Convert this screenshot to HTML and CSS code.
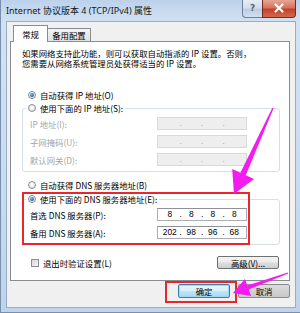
FILE: index.html
```html
<!DOCTYPE html>
<html lang="zh-CN">
<head>
<meta charset="utf-8">
<title>Internet 协议版本 4 (TCP/IPv4) 属性</title>
<link rel="stylesheet" href="styles.css">
</head>
<body>
<div class="window">
  <div class="titlebar">
    <span class="title">Internet 协议版本 4 (TCP/IPv4) 属性</span>
    <div class="caption-btns">
      <div class="cap help">?</div>
      <div class="cap close">
        <svg width="34" height="18" viewBox="0 0 34 18"><path d="M13.5 5.5 L20.5 12.5 M20.5 5.5 L13.5 12.5" stroke="#fff" stroke-width="2.2" stroke-linecap="round"/></svg>
      </div>
    </div>
  </div>
  <div class="client">
    <div class="tabs">
      <div class="tab active">常规</div>
      <div class="tab">备用配置</div>
    </div>
    <div class="panel">
      <p class="desc">如果网络支持此功能，则可以获取自动指派的 IP 设置。否则，</p>
      <p class="desc">您需要从网络系统管理员处获得适当的 IP 设置。</p>
      <div class="option first gap-a"><span class="radio on"></span>自动获得 IP 地址(O)</div>
      <fieldset class="group g1">
        <legend><span class="option"><span class="radio"></span>使用下面的 IP 地址(S):</span></legend>
        <div class="row dis"><span class="lbl">IP 地址(I):</span><span class="ip off"><i></i><b>.</b><i></i><b>.</b><i></i><b>.</b><i></i></span></div>
        <div class="row dis"><span class="lbl">子网掩码(U):</span><span class="ip off"><i></i><b>.</b><i></i><b>.</b><i></i><b>.</b><i></i></span></div>
        <div class="row dis"><span class="lbl">默认网关(D):</span><span class="ip off"><i></i><b>.</b><i></i><b>.</b><i></i><b>.</b><i></i></span></div>
      </fieldset>
      <div class="option first gap-b"><span class="radio"></span>自动获得 DNS 服务器地址(B)</div>
      <fieldset class="group g2">
        <legend><span class="option"><span class="radio on"></span>使用下面的 DNS 服务器地址(E):</span></legend>
        <div class="row"><span class="lbl">首选 DNS 服务器(P):</span><span class="ip"><i>8</i><b>.</b><i>8</i><b>.</b><i>8</i><b>.</b><i>8</i></span></div>
        <div class="row"><span class="lbl">备用 DNS 服务器(A):</span><span class="ip"><i>202</i><b>.</b><i>98</i><b>.</b><i>96</i><b>.</b><i>68</i></span></div>
      </fieldset>
      <div class="checkrow">
        <span class="check"></span><span class="checklbl">退出时验证设置(L)</span>
        <span class="btn adv">高级(V)...</span>
      </div>
    </div>
    <div class="actions">
      <span class="btn ok">确定</span>
      <span class="btn cancel">取消</span>
    </div>
  </div>
  <svg class="annot" width="300" height="313" viewBox="0 0 300 313">
    <rect x="23" y="193" width="226" height="51" fill="none" stroke="#e8272c" stroke-width="2"/>
    <rect x="166" y="282" width="70" height="20" fill="none" stroke="#e8272c" stroke-width="2"/>
    <polygon points="272.4,107.7 273.6,108.3 245.8,175.2 254,179 234,194 232.2,169 240.4,172.8" fill="#f21cf0"/>
    <polygon points="287.8,272.4 288.2,273.6 248.7,289.4 251.1,296 233,293 244.9,279 247.3,285.6" fill="#f21cf0"/>
  </svg>
</div>
</body>
</html>
```
FILE: styles.css
```css
* { box-sizing: border-box; }
html, body { margin: 0; padding: 0; }
body {
  width: 300px;
  height: 313px;
  overflow: hidden;
  font-family: "Noto Sans CJK SC", "Noto Sans", sans-serif;
  font-size: 8.4px;
  color: #000;
  background: #fff;
}
.window {
  position: relative;
  width: 300px;
  height: 313px;
  display: flex;
  flex-direction: column;
  background: linear-gradient(to bottom, #bcd2eb 0, #d3e2f2 22px, #c8dbef 60%, #bfd3ea 100%);
  box-shadow: inset 1px 0 0 #7890ad, inset 0 -1px 0 #7890ad;
}
.titlebar {
  height: 22px;
  flex: none;
  display: flex;
  align-items: flex-start;
}
.title {
  padding-left: 6px;
  line-height: 22px;
  font-family: "Noto Sans", "Noto Sans CJK SC", sans-serif;
  font-size: 9px;
  color: #1a1a1a;
  white-space: nowrap;
}
.caption-btns {
  margin-left: auto;
  margin-right: 4px;
  display: flex;
}
.cap {
  height: 18px;
  border: 1px solid #6d7f99;
  border-top: none;
}
.help {
  width: 20px;
  border-right: none;
  border-radius: 0 0 0 4px;
  background: linear-gradient(to bottom, #e6edf6 0, #d2deec 45%, #bccde2 55%, #d2e0ef 100%);
  color: #5a6472;
  font-family: "DejaVu Sans", sans-serif;
  font-size: 9px;
  font-weight: bold;
  line-height: 16px;
  text-align: center;
}
.close {
  width: 34px;
  border-color: #6e2c22;
  border-radius: 0 0 4px 0;
  background: linear-gradient(to bottom, #e7a594 0, #d6735d 45%, #c44128 55%, #d36a4f 100%);
}
.close svg { display: block; margin: -1px 0 0 -1px; }
.client {
  flex: 1;
  margin: 0 5px 6px 7px;
  padding: 3px 5px 0 3px;
  background: #f0f0f0;
  box-shadow: 0 0 0 1px #98adc6;
}
.tabs {
  height: 16px;
  padding-left: 3px;
  display: flex;
  align-items: flex-end;
}
.tab {
  height: 13px;
  width: 43px;
  border: 1px solid #898c95;
  border-left: none;
  border-bottom: none;
  background: linear-gradient(to bottom, #f3f3f3, #e2e2e2);
  text-align: center;
  line-height: 12px;
  white-space: nowrap;
}
.tab.active {
  position: relative;
  z-index: 1;
  width: 35px;
  height: 17px;
  margin-bottom: -1px;
  border-left: 1px solid #898c95;
  background: #fff;
  line-height: 16px;
}
.panel {
  height: 240px;
  border: 1px solid #898c95;
  background: #fff;
  padding: 6px 9px 0 11px;
}
.desc {
  margin: 0;
  height: 10px;
  line-height: 10px;
  white-space: nowrap;
}
.option {
  display: flex;
  align-items: center;
  height: 10px;
  line-height: 10px;
  white-space: nowrap;
}
.first { margin-left: 6px; }
.gap-a { margin-top: 22px; }
.gap-b { margin-top: 8px; }
.radio {
  flex: none;
  width: 8px;
  height: 8px;
  margin-right: 4px;
  border-radius: 50%;
  border: 1px solid #8a8d91;
  background: radial-gradient(circle at 50% 40%, #ffffff 0, #e6e6e6 70%, #d4d4d4 100%);
  display: flex;
  align-items: center;
  justify-content: center;
}
.radio.on::after {
  content: "";
  width: 4px;
  height: 4px;
  border-radius: 50%;
  background: radial-gradient(circle at 40% 35%, #7fb8ea 0, #2a6fb8 60%, #194f8e 100%);
}
.group {
  margin: 0;
  min-width: 0;
  border: 1px solid #d5dfe5;
  border-radius: 3px;
  padding: 2px 0 3px 3px;
}
.g1 { margin-top: 3px; }
.g2 { margin-top: 4px; }
.group legend {
  padding: 0 2px;
  line-height: 10px;
}
.row {
  display: flex;
  align-items: center;
  height: 17px;
  padding-left: 4px;
  white-space: nowrap;
}
.row + .row { margin-top: 1px; }
.lbl { width: 127px; flex: none; }
.dis .lbl { color: #a6a6a6; }
.ip {
  width: 90px;
  height: 13px;
  flex: none;
  display: flex;
  align-items: center;
  padding: 0 2px;
  border: 1px solid #abadb3;
  border-top-color: #8e9199;
  background: #fff;
  font-family: "Liberation Sans", "Noto Sans", sans-serif;
  font-size: 8.4px;
  line-height: 11px;
}
.ip i {
  flex: 1;
  font-style: normal;
  text-align: center;
}
.ip b {
  width: 2px;
  font-weight: normal;
  text-align: center;
}
.ip.off {
  background: #eeeeee;
  border-color: #d9d9d9;
  color: #a8a8a8;
}
.checkrow {
  display: flex;
  align-items: center;
  height: 13px;
  margin-top: 11px;
  white-space: nowrap;
}
.check {
  width: 8px;
  height: 8px;
  margin-left: 9px;
  margin-right: 4px;
  border: 1px solid #8a8d91;
  background: linear-gradient(135deg, #d8d8d8, #f6f6f6);
}
.btn {
  display: flex;
  align-items: center;
  justify-content: center;
  border: 1px solid #707070;
  border-radius: 2px;
  background: linear-gradient(to bottom, #f4f4f4 0, #ebebeb 48%, #dddddd 52%, #cfcfcf 100%);
  white-space: nowrap;
  line-height: 10px;
}
.adv {
  margin-left: auto;
  margin-right: 1px;
  width: 62px;
  height: 13px;
}
.actions {
  display: flex;
  justify-content: flex-end;
  gap: 8px;
  margin-top: 3px;
}
.ok {
  width: 52px;
  height: 14px;
  border-color: #3c7fb1;
  background: linear-gradient(to bottom, #eaf6fd 0, #d9f0fc 48%, #bee6fd 52%, #a7d9f5 100%);
  box-shadow: inset 0 0 0 1px #9ed6f3;
}
.cancel {
  width: 52px;
  height: 14px;
  border-color: #8a8a8a;
  background: linear-gradient(to bottom, #dcdcdc, #c8c8c8);
}
.annot {
  position: absolute;
  left: 0;
  top: 0;
  pointer-events: none;
}
```
